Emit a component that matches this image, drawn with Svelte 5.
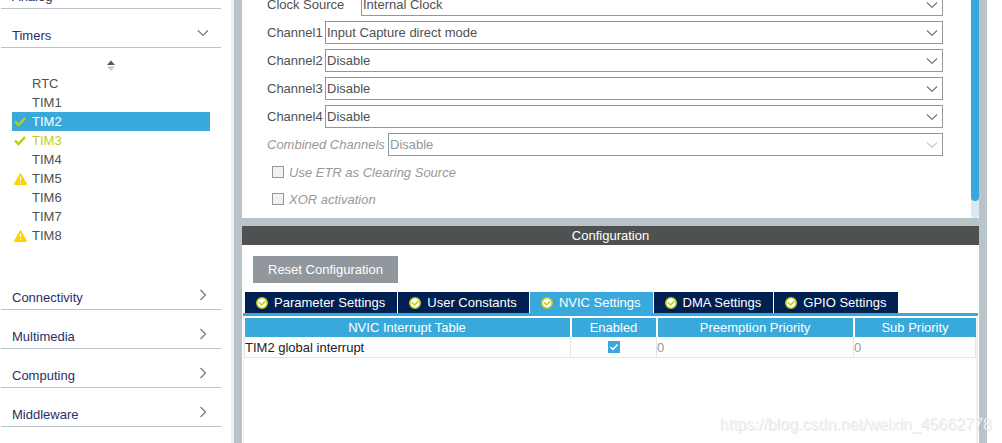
<script>
  const peripherals = [
    { name: 'RTC' },
    { name: 'TIM1' },
    { name: 'TIM2', state: 'ok', selected: true },
    { name: 'TIM3', state: 'ok' },
    { name: 'TIM4' },
    { name: 'TIM5', state: 'warn' },
    { name: 'TIM6' },
    { name: 'TIM7' },
    { name: 'TIM8', state: 'warn' }
  ];
  const categories = ['Connectivity', 'Multimedia', 'Computing', 'Middleware'];
  const fields = [
    { id: 'clock', label: 'Clock Source', value: 'Internal Clock', size: 'medium' },
    { id: 'ch1', label: 'Channel1', value: 'Input Capture direct mode', size: 'short' },
    { id: 'ch2', label: 'Channel2', value: 'Disable', size: 'short' },
    { id: 'ch3', label: 'Channel3', value: 'Disable', size: 'short' },
    { id: 'ch4', label: 'Channel4', value: 'Disable', size: 'short' },
    { id: 'combined', label: 'Combined Channels', value: 'Disable', size: 'long', disabled: true }
  ];
  const options = ['Use ETR as Clearing Source', 'XOR activation'];
  const tabs = ['Parameter Settings', 'User Constants', 'NVIC Settings', 'DMA Settings', 'GPIO Settings'];
  let activeTab = $state('NVIC Settings');
  let enabled = $state(true);
</script>

{#snippet chevron(down)}
  <svg class="chevron" class:down viewBox="0 0 12 12" width="12" height="12" aria-hidden="true">
    <path d={down ? 'M1 3.5 6 8.5 11 3.5' : 'M3.5 1 8.5 6 3.5 11'} fill="none" stroke="currentColor" stroke-width="1.2" />
  </svg>
{/snippet}

<div class="page">
  <nav class="sidebar">
    <button class="category">Analog {@render chevron(false)}</button>
    <button class="category">Timers {@render chevron(true)}</button>
    <div class="timers">
      <button class="sort" aria-label="Sort">
        <svg viewBox="0 0 8 11" width="8" height="11" aria-hidden="true">
          <path d="M0 5 4 0.5 8 5z" fill="#555" />
          <path d="M0 6.5h8L4 11z" fill="#c8c8c8" />
        </svg>
      </button>
      <ul>
        {#each peripherals as p}
          <li class={p.state} class:selected={p.selected}>
            <span class="mark">
              {#if p.state === 'ok'}
                <svg viewBox="0 0 12 10" width="12" height="10" aria-hidden="true">
                  <path d="M1 4.5 4.5 8 11 1" fill="none" stroke="#b9cf0c" stroke-width="2.4" />
                </svg>
              {:else if p.state === 'warn'}
                <svg viewBox="0 0 13 12" width="13" height="12" aria-hidden="true">
                  <path d="M6.5 1.2 12 11H1z" fill="#ffd200" stroke="#ffd200" stroke-width="1.8" stroke-linejoin="round" />
                  <path d="M6.5 3.5v4M6.5 8.7v1.5" stroke="#fff" stroke-width="1.2" />
                </svg>
              {/if}
            </span>
            {p.name}
          </li>
        {/each}
      </ul>
    </div>
    {#each categories as c}
      <button class="category">{c} {@render chevron(false)}</button>
    {/each}
  </nav>

  <main>
    <section class="mode">
      <form>
        {#each fields as f}
          <div class="field {f.size}" class:disabled={f.disabled}>
            <label for={f.id}>{f.label}</label>
            <div class="combo">
              <select id={f.id} disabled={f.disabled}>
                <option>{f.value}</option>
              </select>
              {@render chevron(true)}
            </div>
          </div>
        {/each}
        {#each options as o}
          <label class="option"><input type="checkbox" disabled />{o}</label>
        {/each}
      </form>
      <div class="track"><div class="thumb"></div></div>
    </section>

    <section class="config">
      <h2>Configuration</h2>
      <button class="reset">Reset Configuration</button>
      <div class="tabs" role="tablist">
        {#each tabs as t}
          <button role="tab" aria-selected={t === activeTab} class:active={t === activeTab} onclick={() => (activeTab = t)}>
            <svg viewBox="0 0 12 12" width="12" height="12" aria-hidden="true">
              <circle cx="6" cy="6" r="5.2" fill="#fff" stroke="#bccf1c" stroke-width="1.6" />
              <path d="M3 5.4 5.6 8 9.2 4.4" fill="none" stroke="#bccf1c" stroke-width="1.5" />
            </svg>
            {t}
          </button>
        {/each}
      </div>
      <div class="panel">
        <table>
          <colgroup>
            <col class="c1" /><col class="c2" /><col class="c3" /><col class="c4" />
          </colgroup>
          <thead>
            <tr><th>NVIC Interrupt Table</th><th>Enabled</th><th>Preemption Priority</th><th>Sub Priority</th></tr>
          </thead>
          <tbody>
            <tr>
              <td>TIM2 global interrupt</td>
              <td class="center"><input type="checkbox" class="tick" bind:checked={enabled} aria-label="Enabled" /></td>
              <td class="dim">0</td>
              <td class="dim">0</td>
            </tr>
          </tbody>
        </table>
      </div>
    </section>
  </main>
  <div class="watermark">https://blog.csdn.net/weixin_45662778</div>
</div>

<style>
  :global(body) {
    margin: 0;
    background: #fff;
  }
  .page {
    position: relative;
    display: flex;
    height: 100vh;
    overflow: hidden;
    padding-right: 15px;
    box-sizing: border-box;
    font: 13px/19px "Liberation Sans", Arial, sans-serif;
    color: #4f5150;
  }
  button,
  select {
    font: inherit;
    color: inherit;
    border: 0;
    border-radius: 0;
    margin: 0;
    background: none;
  }
  .sidebar {
    flex: 0 0 231px;
    box-sizing: border-box;
    margin-top: -30px;
    padding: 0 10px 0 1px;
    box-shadow: 3px 0 #eff1f4;
  }
  .category {
    display: flex;
    justify-content: space-between;
    align-items: center;
    width: 100%;
    height: 39px;
    padding: 14px 12px 0 11px;
    border-bottom: 1px solid #b9c4ca;
    color: #2a2f68;
  }
  .chevron {
    color: #777;
    flex: none;
  }
  .category .chevron {
    margin-bottom: 4px;
  }
  .timers {
    padding: 12px 11px 26px;
  }
  .sort {
    display: block;
    margin: 0 auto 3px;
    padding: 0;
    height: 11px;
    line-height: 0;
  }
  ul {
    list-style: none;
    margin: 0;
    padding: 0;
  }
  li {
    display: flex;
    align-items: center;
    height: 19px;
  }
  .mark {
    display: flex;
    width: 18px;
    padding-left: 2px;
  }
  li.ok {
    color: #bccf1c;
  }
  li.selected {
    background: #39a9dc;
    color: #fff;
  }
  main {
    flex: 1;
    min-width: 0;
    display: flex;
    flex-direction: column;
    gap: 8px;
    margin-left: 3px;
    padding: 0 8px;
    background: #b9c4ca;
  }
  .mode {
    display: flex;
    background: #fff;
  }
  form {
    flex: 1;
    display: flex;
    flex-direction: column;
    gap: 5px;
    margin-top: -7px;
    padding: 0 28px 8px 25px;
  }
  .field {
    display: flex;
    align-items: center;
    height: 23px;
  }
  .field label {
    flex: 0 0 58px;
  }
  .medium label {
    flex-basis: 94px;
  }
  .long label {
    flex-basis: 121px;
  }
  .disabled label,
  .option {
    font-style: italic;
    color: #999;
  }
  .combo {
    flex: 1;
    display: flex;
    align-items: center;
    position: relative;
  }
  select {
    appearance: none;
    width: 100%;
    height: 23px;
    padding: 0 24px 0 1px;
    border: 1px solid #90989e;
    background: #fff;
  }
  select:disabled {
    color: #90989e;
    opacity: 1;
  }
  .combo .chevron {
    position: absolute;
    right: 5px;
    pointer-events: none;
  }
  .disabled .chevron {
    color: #ccc;
  }
  .option {
    display: flex;
    align-items: center;
    gap: 5px;
    height: 22px;
    padding-left: 5px;
  }
  input {
    appearance: none;
    width: 12px;
    height: 12px;
    margin: 0;
    box-sizing: border-box;
    border: 1px solid #90989e;
    background: #f0f1f3;
  }
  .track {
    width: 8px;
    border-radius: 0 0 4px 4px;
    background: #d8e8f5;
  }
  .thumb {
    height: 92%;
    border-radius: 0 0 4px 4px;
    background: #39a9dc;
  }
  .config {
    flex: 1;
    display: flex;
    flex-direction: column;
    background: #fff;
  }
  h2 {
    margin: 0;
    font-size: 13px;
    font-weight: 400;
    text-align: center;
    background: #4f5150;
    color: #fff;
  }
  .reset {
    align-self: flex-start;
    margin: 11px 11px 9px;
    padding: 4px 15px;
    background: #90989e;
    color: #fff;
  }
  .tabs {
    display: flex;
    gap: 1px;
    padding-left: 3px;
  }
  .tabs button {
    display: flex;
    align-items: center;
    gap: 6px;
    height: 21px;
    padding: 0 12px 0 11px;
    background: #002052;
    color: #fff;
    white-space: nowrap;
  }
  .tabs button.active {
    background: #39a9dc;
  }
  .panel {
    flex: 1;
    margin: 0 1px;
    border-top: 3px solid #39a9dc;
    box-shadow: inset 1px 0 #eff1f4, inset -2px 0 #eff1f4;
    padding: 1px 2px 0 1px;
  }
  table {
    width: 100%;
    table-layout: fixed;
    border-collapse: collapse;
  }
  .c1 {
    width: 326px;
  }
  .c2 {
    width: 86px;
  }
  .c4 {
    width: 122px;
  }
  th,
  td {
    padding: 0;
    font-weight: 400;
    text-align: left;
  }
  th {
    height: 19px;
    border: solid #fff;
    border-width: 1px 0 0;
    background: #39a9dc;
    background-clip: padding-box;
    color: #fff;
    text-align: center;
  }
  th + th {
    border-left-width: 2px;
  }
  td {
    height: 20px;
    border: 1px solid #e3e5e7;
    border-top: 0;
    color: #222;
  }
  td.center {
    text-align: center;
    line-height: 0;
  }
  td.dim {
    color: #90989e;
  }
  .tick:checked {
    border: 0;
    background: #39a9dc url("data:image/svg+xml,%3Csvg xmlns='http://www.w3.org/2000/svg' viewBox='0 0 12 12'%3E%3Cpath d='M2.5 6 5 8.5 9.5 3.5' fill='none' stroke='white' stroke-width='1.5'/%3E%3C/svg%3E");
  }
  .watermark {
    position: absolute;
    right: 10px;
    bottom: 9px;
    font-size: 16px;
    color: #f0f0f0;
    text-shadow: 1px 1px rgba(0, 0, 0, 0.1);
    pointer-events: none;
  }
</style>
